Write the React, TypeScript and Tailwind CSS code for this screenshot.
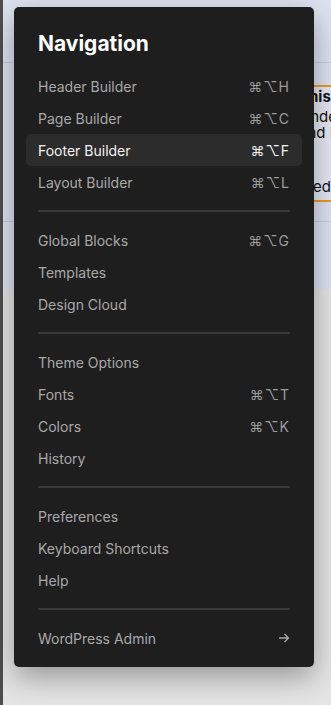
import React from 'react';

type Item = { label: string; keys?: string; arrow?: boolean; active?: boolean };

const groups: Item[][] = [
  [
    { label: 'Header Builder', keys: 'H' },
    { label: 'Page Builder', keys: 'C' },
    { label: 'Footer Builder', keys: 'F', active: true },
    { label: 'Layout Builder', keys: 'L' },
  ],
  [
    { label: 'Global Blocks', keys: 'G' },
    { label: 'Templates' },
    { label: 'Design Cloud' },
  ],
  [
    { label: 'Theme Options' },
    { label: 'Fonts', keys: 'T' },
    { label: 'Colors', keys: 'K' },
    { label: 'History' },
  ],
  [
    { label: 'Preferences' },
    { label: 'Keyboard Shortcuts' },
    { label: 'Help' },
  ],
  [{ label: 'WordPress Admin', arrow: true }],
];

const Row = ({ item }: { item: Item }) => (
  <div
    className={`flex h-[32px] items-center justify-between rounded-[5px] px-[12px] text-[14px] ${
      item.active ? 'bg-[#2c2c2c] text-[#f2f2f2]' : 'text-[#a9a9a9]'
    }`}
  >
    <span>{item.label}</span>
    {item.keys && (
      <span className={`tracking-[1px] ${item.active ? 'text-[#f2f2f2]' : 'text-[#9c9c9c]'}`}>
        ⌘⌥{item.keys}
      </span>
    )}
    {item.arrow && (
      <svg width="12" height="12" viewBox="0 0 12 12" fill="none" stroke="#a9a9a9" strokeWidth="1.3">
        <path d="M1 6h9.5M6.5 2l4 4-4 4" />
      </svg>
    )}
  </div>
);

export default function App() {
  return (
    <div className="relative flex h-[705px] w-[331px] overflow-hidden font-['Inter',sans-serif]">
      {/* left window edge */}
      <div className="w-[3px] bg-[#4e4e4e]" />
      <div className="flex min-w-0 flex-1 flex-col">
        {/* page underneath */}
        <div className="h-[289px] bg-[#dfe3f1] pt-[62px]">
          <div className="h-[1px] bg-[#c9cdd9]" />
          <div className="ml-[296px] mt-[22px] h-[117px] overflow-hidden whitespace-nowrap border-y-2 border-[#e99a2c] bg-[#e6e9f4] pt-[2px] text-[15px] leading-[16px] text-[#111]">
            <div className="font-bold">This</div>
            <div className="mt-[4px]">Under</div>
            <div>and News</div>
            <div className="mt-[38px]">Wedne</div>
          </div>
          <div className="mt-[19px] h-[1px] bg-[#c9cdd9]" />
        </div>
        <div className="flex-1 bg-[#e5e5e5]" />
      </div>

      {/* navigation popover */}
      <div className="absolute left-[14px] top-[7px] w-[300px] rounded-[5px] bg-[#1e1e1e] px-[12px] pb-[13px] pt-[25px] shadow-[0_10px_30px_rgba(0,0,0,0.35)]">
        <h2 className="mb-[14px] px-[12px] text-[21px] font-bold leading-[24px] text-white">Navigation</h2>
        {groups.map((group, gi) => (
          <div key={gi}>
            {gi > 0 && <div className="mx-[12px] my-[12px] h-[2px] bg-[#383838]" />}
            {group.map((item) => (
              <Row key={item.label} item={item} />
            ))}
          </div>
        ))}
      </div>
    </div>
  );
}
